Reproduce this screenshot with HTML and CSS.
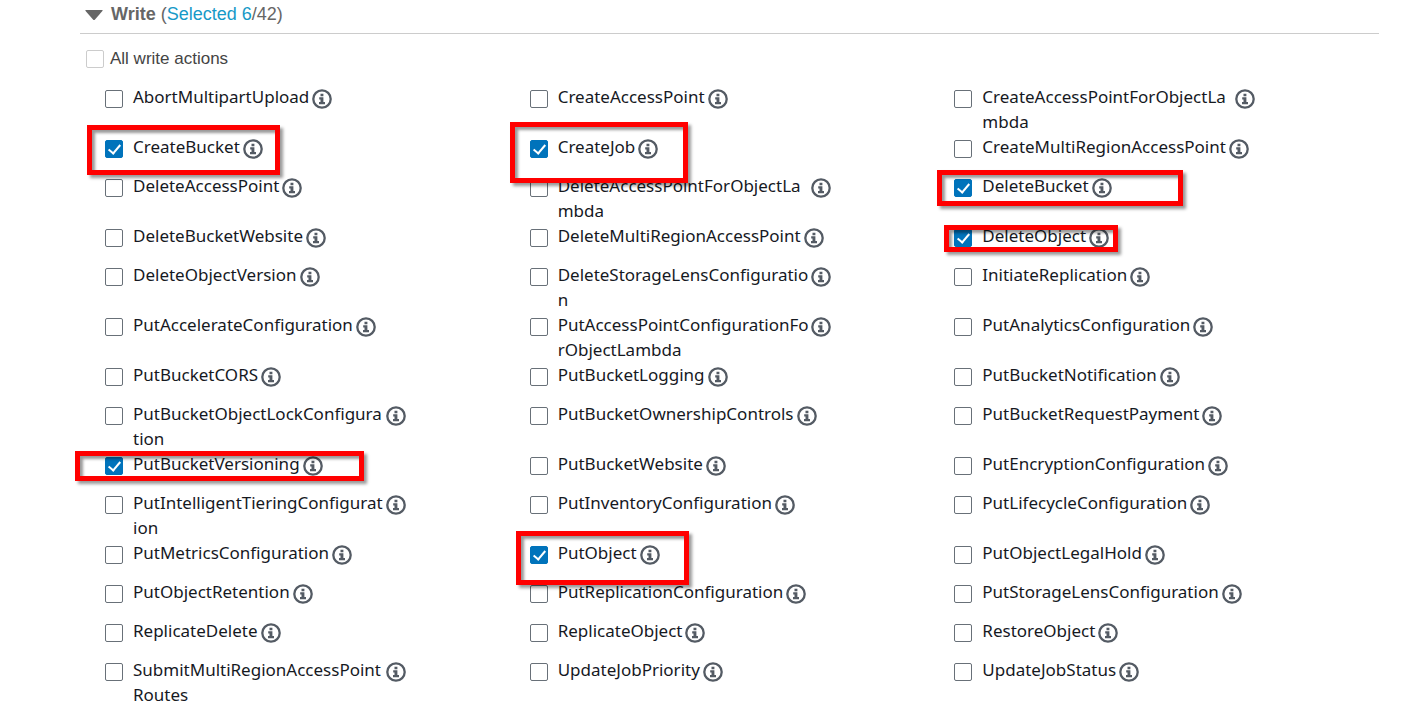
FILE: index.html
```html
<!DOCTYPE html>
<html lang="en">
<head>
<meta charset="utf-8">
<title>Write actions</title>
<link rel="stylesheet" href="styles.css">
</head>
<body>
<svg class="sprite" aria-hidden="true">
  <symbol id="info" viewBox="0 0 20 20">
    <circle cx="10" cy="10" r="8.7" fill="#fff" stroke="#545b64" stroke-width="2.3"/>
    <path fill="#545b64" d="M8.500 4.700h2.900v2.500H8.500zM7.200 8.300h4.200v4.700h1.600v2.200H7v-2.200h1.500v-2.600H7.200z"/>
  </symbol>
</svg>
<main class="panel">
  <header class="panel-head">
    <button class="toggle" type="button" aria-expanded="true" aria-label="Collapse Write">
      <svg width="18" height="10" viewBox="0 0 18 10"><path fill="#666" d="M1 0h16q1.200 0 .4 1L10 9.500q-1 1-2 0L.6 1Q-.2 0 1 0z"/></svg>
    </button>
    <h2 class="title"><b>Write</b> (<a href="#actions">Selected 6</a>/42)</h2>
  </header>
  <div class="all"><input class="check pale" type="checkbox" id="all"><label for="all">All write actions</label></div>
  <div class="actions" id="actions">
    <div class="action"><input class="check" type="checkbox" id="a1"><label for="a1">AbortMultipartUpload</label><button class="info" type="button" aria-label="Info"><svg><use href="#info"/></svg></button></div>
    <div class="action"><input class="check" type="checkbox" id="a2"><label for="a2">CreateAccessPoint</label><button class="info" type="button" aria-label="Info"><svg><use href="#info"/></svg></button></div>
    <div class="action"><input class="check" type="checkbox" id="a3"><label for="a3">CreateAccessPointForObjectLa<wbr>mbda</label><button class="info" type="button" aria-label="Info"><svg><use href="#info"/></svg></button></div>

    <div class="action"><input class="check" type="checkbox" id="a4" checked><label for="a4">CreateBucket</label><button class="info" type="button" aria-label="Info"><svg><use href="#info"/></svg></button><span class="mark mark-create-bucket"></span></div>
    <div class="action"><input class="check" type="checkbox" id="a5" checked><label for="a5">CreateJob</label><button class="info" type="button" aria-label="Info"><svg><use href="#info"/></svg></button><span class="mark mark-create-job"></span></div>
    <div class="action"><input class="check" type="checkbox" id="a6"><label for="a6">CreateMultiRegionAccessPoint</label><button class="info" type="button" aria-label="Info"><svg><use href="#info"/></svg></button></div>

    <div class="action"><input class="check" type="checkbox" id="a7"><label for="a7">DeleteAccessPoint</label><button class="info" type="button" aria-label="Info"><svg><use href="#info"/></svg></button></div>
    <div class="action"><input class="check" type="checkbox" id="a8"><label for="a8">DeleteAccessPointForObjectLa<wbr>mbda</label><button class="info" type="button" aria-label="Info"><svg><use href="#info"/></svg></button></div>
    <div class="action"><input class="check" type="checkbox" id="a9" checked><label for="a9">DeleteBucket</label><button class="info" type="button" aria-label="Info"><svg><use href="#info"/></svg></button><span class="mark mark-delete-bucket"></span></div>

    <div class="action"><input class="check" type="checkbox" id="a10"><label for="a10">DeleteBucketWebsite</label><button class="info" type="button" aria-label="Info"><svg><use href="#info"/></svg></button></div>
    <div class="action"><input class="check" type="checkbox" id="a11"><label for="a11">DeleteMultiRegionAccessPoint</label><button class="info" type="button" aria-label="Info"><svg><use href="#info"/></svg></button></div>
    <div class="action"><input class="check" type="checkbox" id="a12" checked><label for="a12">DeleteObject</label><button class="info" type="button" aria-label="Info"><svg><use href="#info"/></svg></button><span class="mark mark-delete-object"></span></div>

    <div class="action"><input class="check" type="checkbox" id="a13"><label for="a13">DeleteObjectVersion</label><button class="info" type="button" aria-label="Info"><svg><use href="#info"/></svg></button></div>
    <div class="action"><input class="check" type="checkbox" id="a14"><label for="a14">DeleteStorageLensConfiguratio<wbr>n</label><button class="info" type="button" aria-label="Info"><svg><use href="#info"/></svg></button></div>
    <div class="action"><input class="check" type="checkbox" id="a15"><label for="a15">InitiateReplication</label><button class="info" type="button" aria-label="Info"><svg><use href="#info"/></svg></button></div>

    <div class="action"><input class="check" type="checkbox" id="a16"><label for="a16">PutAccelerateConfiguration</label><button class="info" type="button" aria-label="Info"><svg><use href="#info"/></svg></button></div>
    <div class="action"><input class="check" type="checkbox" id="a17"><label for="a17">PutAccessPointConfigurationFo<wbr>rObjectLambda</label><button class="info" type="button" aria-label="Info"><svg><use href="#info"/></svg></button></div>
    <div class="action"><input class="check" type="checkbox" id="a18"><label for="a18">PutAnalyticsConfiguration</label><button class="info" type="button" aria-label="Info"><svg><use href="#info"/></svg></button></div>

    <div class="action"><input class="check" type="checkbox" id="a19"><label for="a19">PutBucketCORS</label><button class="info" type="button" aria-label="Info"><svg><use href="#info"/></svg></button></div>
    <div class="action"><input class="check" type="checkbox" id="a20"><label for="a20">PutBucketLogging</label><button class="info" type="button" aria-label="Info"><svg><use href="#info"/></svg></button></div>
    <div class="action"><input class="check" type="checkbox" id="a21"><label for="a21">PutBucketNotification</label><button class="info" type="button" aria-label="Info"><svg><use href="#info"/></svg></button></div>

    <div class="action"><input class="check" type="checkbox" id="a22"><label for="a22">PutBucketObjectLockConfigura<wbr>tion</label><button class="info" type="button" aria-label="Info"><svg><use href="#info"/></svg></button></div>
    <div class="action"><input class="check" type="checkbox" id="a23"><label for="a23">PutBucketOwnershipControls</label><button class="info" type="button" aria-label="Info"><svg><use href="#info"/></svg></button></div>
    <div class="action"><input class="check" type="checkbox" id="a24"><label for="a24">PutBucketRequestPayment</label><button class="info" type="button" aria-label="Info"><svg><use href="#info"/></svg></button></div>

    <div class="action"><input class="check" type="checkbox" id="a25" checked><label for="a25">PutBucketVersioning</label><button class="info" type="button" aria-label="Info"><svg><use href="#info"/></svg></button><span class="mark mark-versioning"></span></div>
    <div class="action"><input class="check" type="checkbox" id="a26"><label for="a26">PutBucketWebsite</label><button class="info" type="button" aria-label="Info"><svg><use href="#info"/></svg></button></div>
    <div class="action"><input class="check" type="checkbox" id="a27"><label for="a27">PutEncryptionConfiguration</label><button class="info" type="button" aria-label="Info"><svg><use href="#info"/></svg></button></div>

    <div class="action"><input class="check" type="checkbox" id="a28"><label for="a28">PutIntelligentTieringConfigurat<wbr>ion</label><button class="info" type="button" aria-label="Info"><svg><use href="#info"/></svg></button></div>
    <div class="action"><input class="check" type="checkbox" id="a29"><label for="a29">PutInventoryConfiguration</label><button class="info" type="button" aria-label="Info"><svg><use href="#info"/></svg></button></div>
    <div class="action"><input class="check" type="checkbox" id="a30"><label for="a30">PutLifecycleConfiguration</label><button class="info" type="button" aria-label="Info"><svg><use href="#info"/></svg></button></div>

    <div class="action"><input class="check" type="checkbox" id="a31"><label for="a31">PutMetricsConfiguration</label><button class="info" type="button" aria-label="Info"><svg><use href="#info"/></svg></button></div>
    <div class="action"><input class="check" type="checkbox" id="a32" checked><label for="a32">PutObject</label><button class="info" type="button" aria-label="Info"><svg><use href="#info"/></svg></button><span class="mark mark-put-object"></span></div>
    <div class="action"><input class="check" type="checkbox" id="a33"><label for="a33">PutObjectLegalHold</label><button class="info" type="button" aria-label="Info"><svg><use href="#info"/></svg></button></div>

    <div class="action"><input class="check" type="checkbox" id="a34"><label for="a34">PutObjectRetention</label><button class="info" type="button" aria-label="Info"><svg><use href="#info"/></svg></button></div>
    <div class="action"><input class="check" type="checkbox" id="a35"><label for="a35">PutReplicationConfiguration</label><button class="info" type="button" aria-label="Info"><svg><use href="#info"/></svg></button></div>
    <div class="action"><input class="check" type="checkbox" id="a36"><label for="a36">PutStorageLensConfiguration</label><button class="info" type="button" aria-label="Info"><svg><use href="#info"/></svg></button></div>

    <div class="action"><input class="check" type="checkbox" id="a37"><label for="a37">ReplicateDelete</label><button class="info" type="button" aria-label="Info"><svg><use href="#info"/></svg></button></div>
    <div class="action"><input class="check" type="checkbox" id="a38"><label for="a38">ReplicateObject</label><button class="info" type="button" aria-label="Info"><svg><use href="#info"/></svg></button></div>
    <div class="action"><input class="check" type="checkbox" id="a39"><label for="a39">RestoreObject</label><button class="info" type="button" aria-label="Info"><svg><use href="#info"/></svg></button></div>

    <div class="action"><input class="check" type="checkbox" id="a40"><label for="a40">SubmitMultiRegionAccessPoint Routes</label><button class="info" type="button" aria-label="Info"><svg><use href="#info"/></svg></button></div>
    <div class="action"><input class="check" type="checkbox" id="a41"><label for="a41">UpdateJobPriority</label><button class="info" type="button" aria-label="Info"><svg><use href="#info"/></svg></button></div>
    <div class="action"><input class="check" type="checkbox" id="a42"><label for="a42">UpdateJobStatus</label><button class="info" type="button" aria-label="Info"><svg><use href="#info"/></svg></button></div>
  </div>
</main>
</body>
</html>
```
FILE: styles.css
```css
*, *::before { box-sizing: border-box; }
body {
  margin: 0;
  background: #fff;
  color: #16191f;
  font: 17px/25px "Noto Sans", "Open Sans", sans-serif;
}
.sprite { position: absolute; width: 0; height: 0; }
.panel { padding: 0 33px 0 80px; }
.panel-head {
  display: flex;
  align-items: center;
  gap: 8px;
  padding: 2px 0 6px 5px;
  border-bottom: 1px solid #ccc;
  font-family: "Liberation Sans", Arial, sans-serif;
  color: #666;
}
.toggle, .info {
  display: flex;
  flex: none;
  padding: 0;
  border: 0;
  background: none;
  cursor: pointer;
}
.title { margin: 0; font-size: 18px; font-weight: 400; }
.title a { color: #1699c7; text-decoration: none; }
.all {
  display: flex;
  align-items: center;
  gap: 6px;
  padding: 12px 0 13px 6px;
  font-family: "Liberation Sans", Arial, sans-serif;
  color: #444;
}
.check {
  appearance: none;
  flex: none;
  width: 18px;
  height: 18px;
  margin: 0;
  border: 1px solid #687078;
  border-radius: 2px;
  background: #fff;
}
.pale { border-color: #ccc; }
.check:checked {
  border-color: #0073bb;
  background: #0073bb;
}
.check:checked::before {
  content: "";
  display: block;
  width: 7px;
  height: 12px;
  margin: 1px 0 0 5px;
  border: solid #fff;
  border-width: 0 2px 2px 0;
  transform: rotate(40deg);
}
.actions {
  display: grid;
  grid-template-columns: repeat(3, minmax(0, 1fr));
  padding-left: 25px;
}
.action {
  position: relative;
  display: flex;
  align-items: flex-start;
  min-height: 39px;
}
.action .check { margin: 6px 10px 0 0; }
.action label { max-width: 250px; }
.info { margin: 5px 0 0 3px; }
.info svg { width: 20px; height: 20px; }

/* Highlight frames drawn over the list */
.mark {
  position: absolute;
  z-index: 1;
  border: 5px solid #f00;
  box-shadow: 3px 3px 3px rgba(0, 0, 0, .4), inset 3px 3px 3px rgba(0, 0, 0, .4);
  pointer-events: none;
}
.mark-create-bucket { left: -18px; top: -9px; width: 193px; height: 50px; }
.mark-create-job { left: -20px; top: -12px; width: 178px; height: 61px; }
.mark-delete-bucket { left: -17px; top: -3px; width: 246px; height: 36px; }
.mark-delete-object { left: -10px; top: 2px; width: 174px; height: 27px; }
.mark-versioning { left: -30px; top: 0; width: 289px; height: 30px; }
.mark-put-object { left: -14px; top: -9px; width: 173px; height: 54px; }
```
